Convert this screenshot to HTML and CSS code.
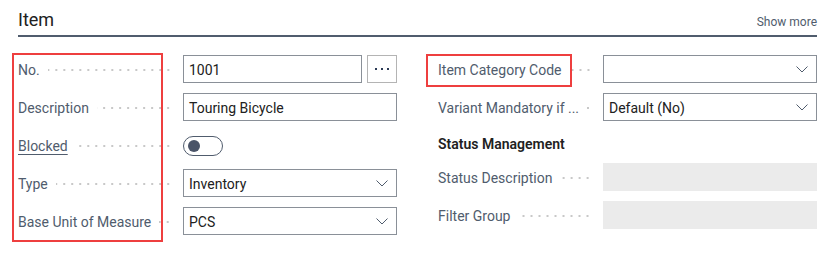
FILE: index.html
```html
<!DOCTYPE html>
<html lang="en">
<head>
<meta charset="utf-8">
<title>Item</title>
<link rel="stylesheet" href="styles.css">
</head>
<body>
<div class="page">
  <header class="head">
    <h2 class="title">Item</h2>
    <a class="more">Show more</a>
  </header>
  <div class="cols">
    <div class="col">
      <div class="row">
        <div class="lbl"><span>No.</span><i class="lead"></i></div>
        <div class="split">
          <div class="inp">1001</div>
          <button class="ell" type="button"><svg width="14" height="3" viewBox="0 0 14 3"><rect x="0" y="0" width="2" height="2" fill="#2b3a55"/><rect x="6" y="0" width="2" height="2" fill="#2b3a55"/><rect x="12" y="0" width="2" height="2" fill="#2b3a55"/></svg></button>
        </div>
      </div>
      <div class="row">
        <div class="lbl"><span>Description</span><i class="lead"></i></div>
        <div class="inp">Touring Bicycle</div>
      </div>
      <div class="row">
        <div class="lbl"><span class="link">Blocked</span><i class="lead"></i></div>
        <div class="tgl-wrap"><span class="tgl"><span class="knob"></span></span></div>
      </div>
      <div class="row">
        <div class="lbl"><span>Type</span><i class="lead"></i></div>
        <div class="inp sel">Inventory<svg class="chev" width="12" height="7" viewBox="0 0 12 7"><path d="M0.5 0.5 L6 6 L11.5 0.5" fill="none" stroke="#505c6d" stroke-width="1"/></svg></div>
      </div>
      <div class="row">
        <div class="lbl"><span>Base Unit of Measure</span><i class="lead"></i></div>
        <div class="inp sel">PCS<svg class="chev" width="12" height="7" viewBox="0 0 12 7"><path d="M0.5 0.5 L6 6 L11.5 0.5" fill="none" stroke="#505c6d" stroke-width="1"/></svg></div>
      </div>
    </div>
    <div class="col">
      <div class="row">
        <div class="lbl"><span>Item Category Code</span><i class="lead"></i></div>
        <div class="inp sel"><svg class="chev" width="12" height="7" viewBox="0 0 12 7"><path d="M0.5 0.5 L6 6 L11.5 0.5" fill="none" stroke="#505c6d" stroke-width="1"/></svg></div>
      </div>
      <div class="row">
        <div class="lbl"><span>Variant Mandatory if ...</span><i class="lead"></i></div>
        <div class="inp sel">Default (No)<svg class="chev" width="12" height="7" viewBox="0 0 12 7"><path d="M0.5 0.5 L6 6 L11.5 0.5" fill="none" stroke="#505c6d" stroke-width="1"/></svg></div>
      </div>
      <div class="group">Status Management</div>
      <div class="row">
        <div class="lbl"><span>Status Description</span><i class="lead"></i></div>
        <div class="ro"></div>
      </div>
      <div class="row">
        <div class="lbl"><span>Filter Group</span><i class="lead"></i></div>
        <div class="ro"></div>
      </div>
    </div>
  </div>
  <div class="mark mark-left"></div>
  <div class="mark mark-right"></div>
</div>
</body>
</html>
```

FILE: styles.css
```css
* { box-sizing: border-box; }
html, body { margin: 0; padding: 0; background: #ffffff; }
body {
  font-family: Roboto, "Liberation Sans", sans-serif;
  font-size: 14px;
  color: #212121;
}
.page {
  position: relative;
  width: 835px;
  height: 253px;
  padding: 0 18px;
}
.head {
  display: flex;
  justify-content: space-between;
  align-items: flex-end;
  height: 37px;
  border-bottom: 2px solid #505c6d;
  padding-bottom: 3px;
}
.title {
  margin: 0;
  font-size: 18px;
  font-weight: 400;
  line-height: 24px;
  color: #212121;
}
.more {
  font-size: 12px;
  line-height: 16px;
  color: #505c6d;
  padding-bottom: 2px;
}
.cols {
  display: grid;
  grid-template-columns: 379px 379px;
  column-gap: 41px;
  padding-top: 18px;
}
.col {
  display: flex;
  flex-direction: column;
  gap: 10px;
}
.row {
  display: grid;
  grid-template-columns: 165px 214px;
  height: 28px;
  align-items: center;
}
.lbl {
  display: flex;
  align-items: center;
  padding-right: 11px;
  padding-top: 2px;
  color: #505c6d;
  white-space: nowrap;
  line-height: 20px;
}
.lead {
  flex: 1;
  height: 4px;
  margin-left: 8px;
  background-image: radial-gradient(circle, #c8c8c8 0.9px, transparent 1.3px);
  background-size: 8px 4px;
  background-repeat: repeat-x;
  background-position: right center;
}
.link {
  text-decoration: underline;
  text-decoration-color: #505c6d;
  text-underline-offset: 3px;
}
.inp {
  display: flex;
  align-items: center;
  height: 28px;
  border: 1px solid #8a9098;
  padding: 1px 8px 0 5px;
  color: #212121;
  background: #fff;
}
.sel { justify-content: space-between; }
.sel .chev { margin-left: auto; margin-top: -1px; }
.split {
  display: grid;
  grid-template-columns: 179px 30px;
  column-gap: 5px;
}
.ell {
  height: 28px;
  border: 1px solid #b4b4b4;
  background: #fff;
  padding: 0;
  display: flex;
  align-items: center;
  justify-content: center;
}
.tgl-wrap { display: flex; align-items: center; padding-top: 1px; }
.tgl {
  display: flex;
  align-items: center;
  width: 40px;
  height: 20px;
  border: 1px solid #505c6d;
  border-radius: 10px;
  padding-left: 4px;
  background: #fff;
}
.knob {
  width: 12px;
  height: 12px;
  border-radius: 50%;
  background: #4a5468;
}
.group {
  height: 22px;
  padding-top: 3px;
  line-height: 20px;
  font-weight: 600;
  color: #212121;
}
.ro {
  height: 28px;
  background: #ebebeb;
}
.mark {
  position: absolute;
  border: 2px solid #ee3f3f;
}
.mark-left { left: 12px; top: 53px; width: 151px; height: 189px; }
.mark-right { left: 426px; top: 54px; width: 146px; height: 33px; }
```
